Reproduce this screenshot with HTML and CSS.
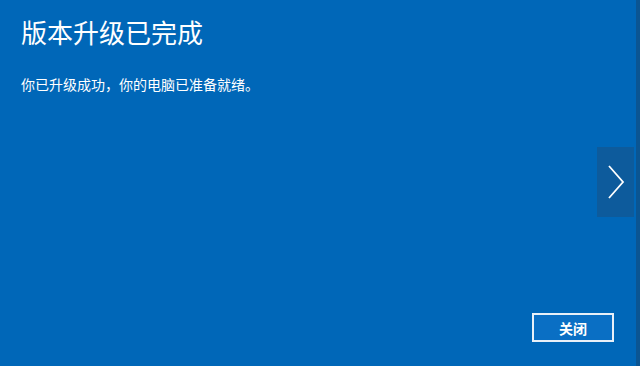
FILE: index.html
```html
<!DOCTYPE html>
<html lang="zh-CN">
<head>
<meta charset="utf-8">
<link rel="stylesheet" href="styles.css">
</head>
<body>
<div class="screen">
  <div class="content">
    <h1 class="title">版本升级已完成</h1>
    <p class="message">你已升级成功，你的电脑已准备就绪。</p>
  </div>
  <div class="next">
    <svg width="18" height="34" viewBox="0 0 18 34"><path d="M2 1 L16 17 L2 33" fill="none" stroke="#ffffff" stroke-width="1.8"/></svg>
  </div>
  <div class="footer">
    <button class="close">关闭</button>
  </div>
</div>
</body>
</html>
```
FILE: styles.css
```css
html, body {
  margin: 0;
  padding: 0;
  width: 640px;
  height: 366px;
  overflow: hidden;
}
.screen {
  position: relative;
  box-sizing: border-box;
  width: 640px;
  height: 366px;
  background: #0067b8;
  border-right: 4px solid #0b5592;
  display: flex;
  flex-direction: column;
  font-family: "Noto Sans CJK SC", "Noto Sans", sans-serif;
  color: #ffffff;
}
.content {
  padding: 13px 0 0 21px;
  flex: 1;
}
.title {
  margin: 0;
  font-size: 26px;
  font-weight: 400;
  line-height: 38px;
}
.message {
  margin: 23px 0 0 0;
  font-size: 14px;
  line-height: 20px;
}
.next {
  position: absolute;
  left: 597px;
  top: 147px;
  width: 37px;
  height: 70px;
  background: #0d5b9c;
  display: flex;
  align-items: center;
  justify-content: center;
}
.footer {
  display: flex;
  justify-content: flex-end;
  padding: 0 22px 24px 0;
}
.close {
  width: 82px;
  height: 29px;
  box-sizing: border-box;
  border: 2px solid #e8f0f8;
  background: #0a6fc4;
  color: #ffffff;
  font-family: "Noto Sans CJK SC", sans-serif;
  font-size: 14px;
  font-weight: 700;
  padding: 0;
}
```
